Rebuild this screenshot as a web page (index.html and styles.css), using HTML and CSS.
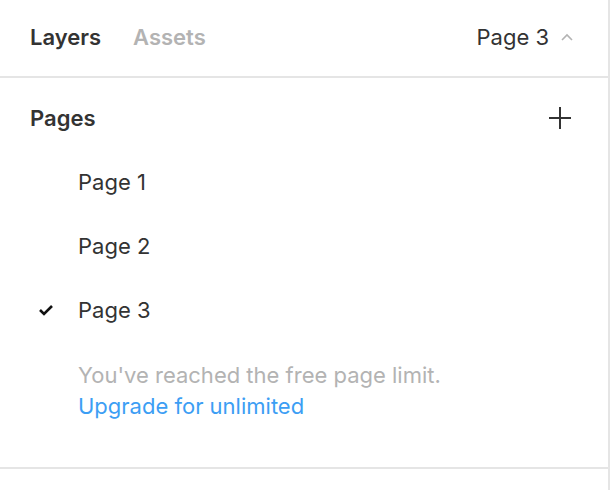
FILE: index.html
```html
<!DOCTYPE html>
<html lang="en">
<head>
    <meta charset="UTF-8">
    <title>Pages</title>
    <link rel="stylesheet" href="styles.css">
</head>
<body>
    <div class="panel">
        <div class="tabs">
            <span class="tab active">Layers</span>
            <span class="tab">Assets</span>
            <span class="current-page">Page 3
                <svg class="chevron" width="14" height="10" viewBox="0 0 14 10">
                    <path d="M2 8 L7 3 L12 8" fill="none" stroke="#b3b3b3" stroke-width="1.6"/>
                </svg>
            </span>
        </div>

        <div class="pages">
            <div class="pages-header">
                <span class="pages-title">Pages</span>
                <svg class="add" width="24" height="24" viewBox="0 0 24 24">
                    <path d="M12 1 V23 M1 12 H23" stroke="#333" stroke-width="2"/>
                </svg>
            </div>

            <div class="page-row first">Page 1</div>
            <div class="page-row">Page 2</div>
            <div class="page-row selected">
                <svg class="check" width="16" height="12" viewBox="0 0 16 12">
                    <path d="M2 6 L6 10 L14 2" fill="none" stroke="#111" stroke-width="2.6"/>
                </svg>
                Page 3
            </div>

            <div class="limit">
                <p class="limit-text">You've reached the free page limit.</p>
                <a class="upgrade" href="#">Upgrade for unlimited</a>
            </div>
        </div>
    </div>
</body>
</html>
```

FILE: styles.css
```css
body {
    margin: 0;
    font-family: Inter, "Noto Sans", sans-serif;
    background-color: #fff;
}

.panel {
    width: 608px;
    height: 490px;
    border-right: 2px solid #e5e5e5;
}

.tabs {
    display: flex;
    align-items: center;
    height: 78px;
    padding: 0 34px 2px 30px;
    border-bottom: 2px solid #e5e5e5;
    box-sizing: border-box;
}

.tab {
    font-size: 22px;
    font-weight: 600;
    color: #b3b3b3;
    margin-right: 32px;
}

.tab.active {
    color: #333;
}

.current-page {
    margin-left: auto;
    display: flex;
    align-items: center;
    gap: 11px;
    font-size: 22px;
    color: #333;
}

.pages {
    border-bottom: 2px solid #e5e5e5;
    padding-bottom: 45px;
}

.pages-header {
    display: flex;
    align-items: center;
    justify-content: space-between;
    height: 80px;
    padding: 0 36px 0 30px;
}

.pages-title {
    font-size: 22px;
    font-weight: 600;
    color: #333;
}

.page-row {
    position: relative;
    display: flex;
    align-items: center;
    height: 64px;
    padding-left: 78px;
    font-size: 22px;
    color: #333;
}

.page-row.first {
    margin-top: -8px;
}

.check {
    position: absolute;
    left: 38px;
}

.limit {
    padding: 18px 0 0 78px;
}

.limit-text {
    margin: 0;
    font-size: 22px;
    color: #b3b3b3;
    line-height: 31px;
}

.upgrade {
    font-size: 22px;
    line-height: 31px;
    color: #3c9ef4;
    text-decoration: none;
}
```
